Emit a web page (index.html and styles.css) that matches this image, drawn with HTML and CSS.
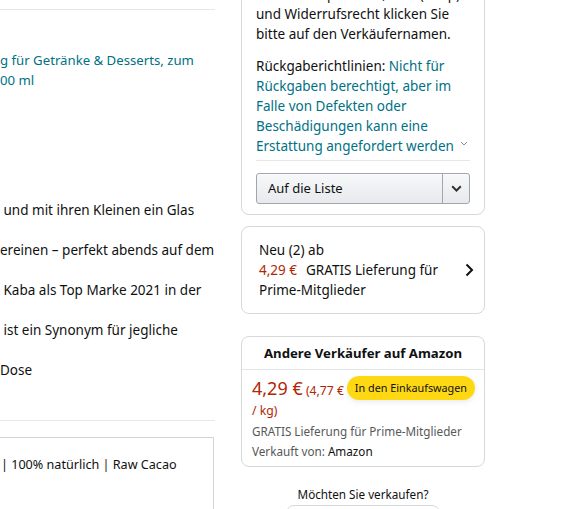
FILE: index.html
```html
<!DOCTYPE html>
<html lang="de">
<head>
<meta charset="utf-8">
<title>Kaba</title>
<link rel="stylesheet" href="styles.css">
</head>
<body>
<div class="page">
  <main class="left">
    <div class="rule top-rule"></div>
    <p class="title-link">g für Getränke &amp; Desserts, zum<br>00 ml</p>
    <ul class="bullets">
      <li>&nbsp;und mit ihren Kleinen ein Glas</li>
      <li>ereinen – perfekt abends auf dem</li>
      <li>&nbsp;Kaba als Top Marke 2021 in der</li>
      <li>&nbsp;ist ein Synonym für jegliche</li>
      <li>Dose</li>
    </ul>
    <div class="rule"></div>
    <div class="aplus-box">
      <p>| 100% natürlich | Raw Cacao</p>
    </div>
  </main>

  <aside class="right">
    <section class="card buy-card">
      <p class="info">Infos zu Impressum, AGB (Shop)<br>und Widerrufsrecht klicken Sie<br>bitte auf den Verkäufernamen.</p>
      <div class="returns">
        <p>Rückgaberichtlinien: <a class="link">Nicht für<br>Rückgaben berechtigt, aber im<br>Falle von Defekten oder<br>Beschädigungen kann eine<br>Erstattung angefordert werden</a></p>
        <svg class="expand" width="8" height="5" viewBox="0 0 8 5"><path d="M1 1l3 3 3-3" fill="none" stroke="#8a8f8f" stroke-width="1"/></svg>
      </div>
      <div class="list-btn">
        <span class="list-label">Auf die Liste</span>
        <span class="list-drop"><svg width="11" height="7" viewBox="0 0 11 7"><path d="M1.2 1.2l4.3 4.3 4.3-4.3" fill="none" stroke="#333" stroke-width="2"/></svg></span>
      </div>
    </section>

    <section class="card new-card">
      <p>Neu (2) ab<br><span class="red">4,29 €</span>GRATIS Lieferung für<br>Prime-Mitglieder</p>
      <svg class="next" width="9" height="14" viewBox="0 0 9 14"><path d="M1.5 1.5l5.5 5.5-5.5 5.5" fill="none" stroke="#0f1111" stroke-width="2"/></svg>
    </section>

    <section class="card seller-card">
      <h2 class="seller-head">Andere Verkäufer auf Amazon</h2>
      <div class="seller-body">
        <p class="price-line"><span class="cart-btn">In den Einkaufswagen</span><span class="big-price">4,29 €</span> <span class="unit-price">(4,77 € / kg)</span></p>
        <p class="muted">GRATIS Lieferung für Prime-Mitglieder</p>
        <p class="muted">Verkauft von: <span class="dark">Amazon</span></p>
      </div>
    </section>

    <p class="sell-q">Möchten Sie verkaufen?</p>
    <div class="sell-btn"></div>
  </aside>
</div>
</body>
</html>
```

FILE: styles.css
```css
* { box-sizing: border-box; }

html, body {
  margin: 0;
  padding: 0;
  background: #fff;
  overflow: hidden;
}

body {
  font-family: "Noto Sans", "Open Sans", sans-serif;
  font-size: 13.5px;
  line-height: 20px;
  color: #0f1111;
}

p { margin: 0; }

.page {
  display: flex;
  align-items: flex-start;
  height: 509px;
  overflow: hidden;
}

/* ---------- left column ---------- */
.left {
  width: 215px;
  flex: none;
  white-space: nowrap;
}

.rule {
  height: 1px;
  background: #e7e7e7;
}

.top-rule { margin-top: 9px; }

.title-link {
  margin-top: 40px;
  color: #007185;
  font-size: 13.2px;
}

.bullets {
  list-style: none;
  margin: 110px 0 0;
  padding: 0;
}

.bullets li { margin-bottom: 20px; }
.bullets li:last-child { margin-bottom: 40px; }

.aplus-box {
  margin-top: 16px;
  margin-right: 1px;
  height: 120px;
  border: 1px solid #d5d5d5;
  border-left: none;
  padding: 17px 0 0 1px;
  font-size: 12.6px;
}

/* ---------- right column ---------- */
.right {
  width: 244px;
  flex: none;
  margin-left: 26px;
  white-space: nowrap;
}

.card {
  border: 1px solid #d5d9d9;
  border-radius: 8px;
}

.buy-card {
  margin-top: -31px;
  padding: 14px 14px 10px;
}

.returns {
  margin-top: 12px;
  display: flex;
  align-items: flex-end;
  justify-content: space-between;
  padding-bottom: 4px;
  border-bottom: 1px solid #e7e7e7;
}

.link { color: #007185; }

.expand { margin: 0 2px 10px 0; }

.list-btn {
  margin-top: 12px;
  height: 31px;
  display: flex;
  border: 1px solid #a2a6ac;
  border-radius: 3px;
  background: linear-gradient(#f7f8fa, #e7e9ec);
  box-shadow: 0 1px 0 rgba(255,255,255,.6) inset;
  font-size: 13px;
}

.list-label {
  flex: 1;
  padding-left: 11px;
  line-height: 29px;
}

.list-drop {
  width: 27px;
  border-left: 1px solid #a2a6ac;
  display: flex;
  align-items: center;
  justify-content: center;
}

.new-card {
  margin-top: 11px;
  padding: 13px 10px 13px 17px;
  display: flex;
  align-items: center;
  justify-content: space-between;
}

.red { color: #b12704; }

.new-card .red { margin-right: 9px; }

.seller-card {
  margin-top: 22px;
}

.seller-head {
  margin: 0;
  padding: 6px 10px;
  font-size: 13.2px;
  font-weight: 700;
  line-height: 20px;
  text-align: center;
  border-bottom: 1px solid #e3e6e6;
}

.seller-body {
  padding: 6px 9px 5px 10px;
}

.price-line {
  white-space: normal;
  color: #b12704;
  font-size: 12.2px;
}

.big-price {
  font-size: 18px;
  line-height: 24px;
}

.cart-btn {
  float: right;
  margin-left: 3px;
  height: 24px;
  padding: 0 8px;
  border-radius: 12px;
  background: #ffd814;
  box-shadow: 0 2px 5px rgba(213,217,217,.5);
  color: #0f1111;
  font-size: 10.8px;
  line-height: 24px;
}

.muted {
  color: #565959;
  font-size: 11.7px;
}

.dark { color: #0f1111; }

.sell-q {
  margin-top: 17px;
  text-align: center;
  font-size: 11.7px;
}

.sell-btn {
  margin: 1px auto 0;
  width: 154px;
  height: 29px;
  border: 1px solid #d5d9d9;
  border-radius: 8px;
}
```
